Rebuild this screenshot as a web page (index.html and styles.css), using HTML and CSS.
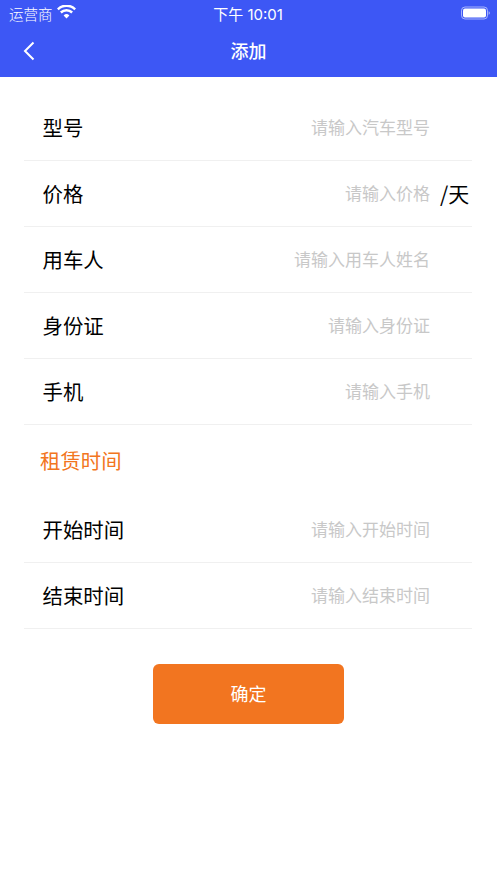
FILE: index.html
```html
<!DOCTYPE html>
<html lang="zh-CN">
<head>
<meta charset="utf-8">
<title>添加</title>
<link rel="stylesheet" href="styles.css">
</head>
<body>
<header class="top">
  <div class="status">
    <div class="status-left">
      <span>运营商</span>
      <svg class="wifi" width="19" height="14" viewBox="0 0 19 14"><path d="M9.500 13.500 6.600 10.400a4.200 4.200 0 0 1 5.800 0Z M4.700 8.400 3 6.600a9.200 9.200 0 0 1 13 0l-1.700 1.800a6.800 6.800 0 0 0-9.600 0Z M1.700 5.200 0 3.400a13.500 13.500 0 0 1 19 0l-1.700 1.800a11.100 11.100 0 0 0-15.600 0Z" fill="#fff"/></svg>
    </div>
    <span class="clock">下午 10:01</span>
    <svg class="battery" width="29" height="14" viewBox="0 0 29 14"><rect x="0.500" y="1" width="26" height="12" rx="3.500" fill="none" stroke="#fff" stroke-opacity=".55"/><rect x="2" y="2.500" width="23" height="9" rx="2" fill="#fff"/><path d="M27.600 5.200c.8.300 1.300 1 1.300 1.800s-.5 1.500-1.300 1.800Z" fill="#fff" fill-opacity=".55"/></svg>
  </div>
  <div class="nav">
    <svg class="back" width="12" height="20" viewBox="0 0 12 20"><path d="M10.500 1.500 2 10l8.500 8.500" fill="none" stroke="#fff" stroke-width="2"/></svg>
    <h1 class="title">添加</h1>
  </div>
</header>
<main class="form">
  <div class="row"><span class="label">型号</span><span class="hint">请输入汽车型号</span></div>
  <div class="row"><span class="label">价格</span><span class="hint">请输入价格</span><span class="unit">/天</span></div>
  <div class="row"><span class="label">用车人</span><span class="hint">请输入用车人姓名</span></div>
  <div class="row"><span class="label">身份证</span><span class="hint">请输入身份证</span></div>
  <div class="row"><span class="label">手机</span><span class="hint">请输入手机</span></div>
  <h2 class="section">租赁时间</h2>
  <div class="row"><span class="label">开始时间</span><span class="hint">请输入开始时间</span></div>
  <div class="row"><span class="label">结束时间</span><span class="hint">请输入结束时间</span></div>
  <button class="confirm" type="button">确定</button>
</main>
</body>
</html>
```
FILE: styles.css
```css
* { box-sizing: border-box; }
html, body { margin: 0; padding: 0; }
body {
  width: 497px;
  height: 883px;
  background: #fff;
  overflow: hidden;
  font-family: "Noto Sans CJK SC", "Liberation Sans", sans-serif;
}
.top { background: #3d57f5; height: 77px; color: #fff; }
.status {
  height: 26px;
  padding: 0 7px 0 9px;
  display: flex;
  align-items: center;
  justify-content: space-between;
  font-size: 14.500px;
  font-weight: 300;
}
.status-left { display: flex; align-items: center; gap: 4px; width: 134px; }
.wifi { margin-top: -3px; }
.clock { font-family: "Inter", "Noto Sans CJK SC", sans-serif; font-size: 15px; font-weight: 400; }
.battery { margin-left: 108px; }
.nav {
  height: 51px;
  display: flex;
  align-items: center;
  justify-content: center;
  position: relative;
  padding-bottom: 3px;
}
.back { position: absolute; left: 23px; top: 15px; }
.title { margin: 0; font-size: 18px; font-weight: 500; line-height: 1; }
.form { padding: 18px 25px 0 24px; display: flex; flex-direction: column; }
.row {
  height: 66px;
  display: flex;
  align-items: center;
  padding: 0 3px 2px 19px;
  border-bottom: 1px solid #f0f0f0;
}
.label { font-size: 20.400px; color: #000; flex: 1; margin-left: -0.500px; }
.hint { font-size: 17px; color: #c8c8c8; padding-right: 39px; }
.row:nth-child(2) .hint { padding-right: 10px; }
.unit { font-size: 21px; color: #000; width: 29px; white-space: nowrap; }
.section {
  margin: 0;
  height: 72px;
  padding: 0 0 2px 16px;
  display: flex;
  align-items: center;
  font-size: 20.400px;
  font-weight: 400;
  color: #f27520;
}
.confirm {
  align-self: center;
  margin: 35px 0 0 1px;
  width: 191px;
  height: 60px;
  border: 0;
  border-radius: 6px;
  background: #f27520;
  color: #fff;
  font-size: 18px;
  font-family: inherit;
  padding: 0 0 3px;
}
```
